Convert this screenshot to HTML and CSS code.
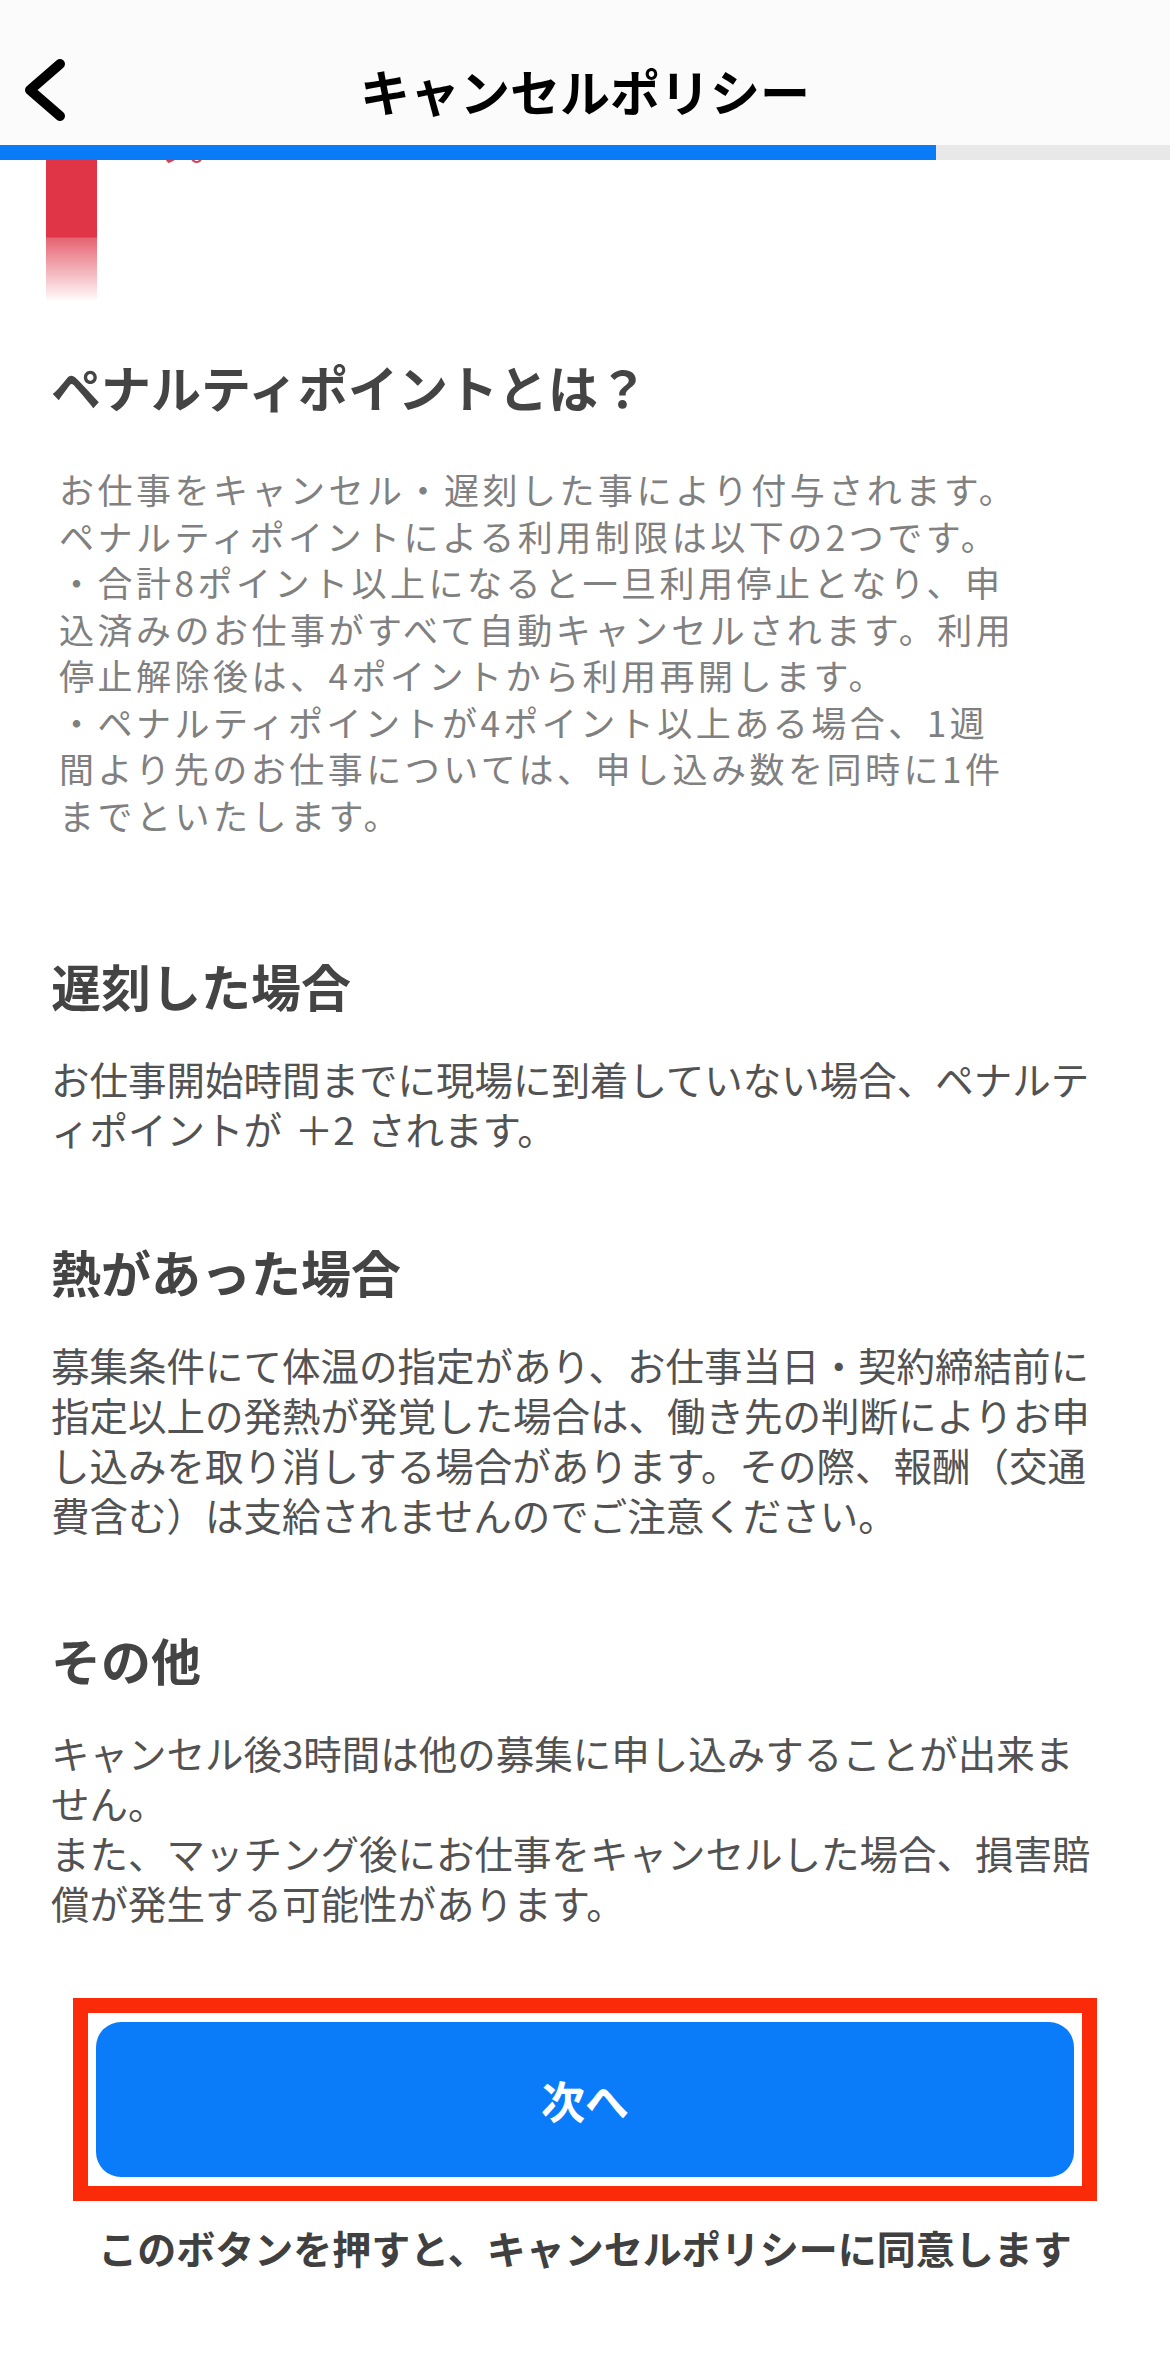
FILE: index.html
```html
<!DOCTYPE html>
<html lang="ja">
<head>
<meta charset="utf-8">
<title>キャンセルポリシー</title>
<link rel="stylesheet" href="styles.css">
</head>
<body>
<div class="screen">
  <header class="navbar">
    <div class="nav-row">
      <button class="back" aria-label="戻る">
        <svg width="44" height="64" viewBox="0 0 44 64"><path d="M36 6 L6 32 L36 58" fill="none" stroke="#000" stroke-width="10" stroke-linecap="round" stroke-linejoin="round"/></svg>
      </button>
      <h1 class="nav-title">キャンセルポリシー</h1>
      <span class="nav-spacer"></span>
    </div>
  </header>
  <div class="progress"><div class="progress-fill" style="width:80%"></div></div>

  <div class="residue">
    <div class="residue-bar"></div>
    <span class="residue-text">す。</span>
  </div>

  <main class="content">
    <section class="block">
      <h2 class="heading">ペナルティポイントとは？</h2>
      <p class="lead">お仕事をキャンセル・遅刻した事により付与されます。<br>ペナルティポイントによる利用制限は以下の2つです。<br>・合計8ポイント以上になると一旦利用停止となり、申<br>込済みのお仕事がすべて自動キャンセルされます。利用<br>停止解除後は、4ポイントから利用再開します。<br>・ペナルティポイントが4ポイント以上ある場合、1週<br>間より先のお仕事については、申し込み数を同時に1件<br>までといたします。</p>
    </section>

    <section class="block">
      <h2 class="heading">遅刻した場合</h2>
      <p class="text">お仕事開始時間までに現場に到着していない場合、ペナルテ<br>ィポイントが <span class="plus">＋2</span> されます。</p>
    </section>

    <section class="block">
      <h2 class="heading">熱があった場合</h2>
      <p class="text">募集条件にて体温の指定があり、お仕事当日・契約締結前に<br>指定以上の発熱が発覚した場合は、働き先の判断によりお申<br>し込みを取り消しする場合があります。その際、報酬（交通<br>費含む）は支給されませんのでご注意ください。</p>
    </section>

    <section class="block">
      <h2 class="heading">その他</h2>
      <p class="text">キャンセル後3時間は他の募集に申し込みすることが出来ま<br>せん。<br>また、マッチング後にお仕事をキャンセルした場合、損害賠<br>償が発生する可能性があります。</p>
    </section>
  </main>

  <div class="cta">
    <div class="cta-frame">
      <button class="next-btn">次へ</button>
    </div>
    <p class="cta-note">このボタンを押すと、キャンセルポリシーに同意します</p>
  </div>
</div>
</body>
</html>
```

FILE: styles.css
```css
* { box-sizing: border-box; }

html, body {
  margin: 0;
  padding: 0;
  background: #ffffff;
}

body {
  font-family: "Noto Sans CJK JP", "Noto Sans", sans-serif;
  color: #4a4a4a;
}

.screen {
  width: 1170px;
  min-height: 2357px;
  background: #ffffff;
}

/* ---------- nav bar ---------- */
.navbar {
  height: 145px;
  background: #fbfbfb;
  padding-top: 55px;
}

.nav-row {
  display: grid;
  grid-template-columns: 1fr auto 1fr;
  align-items: center;
  height: 70px;
}

.back {
  justify-self: start;
  margin-left: 24px;
  padding: 0;
  border: 0;
  background: none;
  display: flex;
  align-items: center;
  height: 70px;
}

.back svg { display: block; }

.nav-title {
  margin: 0;
  font-size: 50px;
  line-height: 70px;
  font-weight: 700;
  color: #000000;
}

/* ---------- progress ---------- */
.progress {
  height: 15px;
  background: #e8e8e8;
}

.progress-fill {
  height: 100%;
  background: #0a7bf6;
}

/* ---------- scrolled residue ---------- */
.residue {
  height: 140px;
  display: flex;
  align-items: flex-start;
  overflow: hidden;
}

.residue-bar {
  margin-left: 46px;
  width: 51px;
  height: 140px;
  background: linear-gradient(to bottom, #df3546 0, #df3546 77px, #e66472 78px, rgba(240, 140, 150, 0.05) 140px);
}

.residue-text {
  margin-left: 58px;
  margin-top: -40px;
  font-size: 38px;
  line-height: 48px;
  color: #d8404f;
}

/* ---------- content ---------- */
.content {
  padding: 53px 0 0 51px;
}

.heading {
  margin: 0;
  font-size: 50px;
  line-height: 67px;
  font-weight: 700;
  color: #444444;
}

.lead {
  margin: 46px 0 0 8px;
  font-size: 35px;
  letter-spacing: 3.5px;
  line-height: 46.5px;
  color: #808080;
  white-space: nowrap;
}

.text {
  margin: 34px 0 0 0;
  font-size: 38.5px;
  line-height: 50px;
  color: #525252;
  white-space: nowrap;
}

.plus {
  margin: 0 4px;
}

.block + .block { margin-top: 114px; }
.block:nth-child(3) { margin-top: 85px; }
.block:nth-child(4) { margin-top: 87px; }

/* ---------- call to action ---------- */
.cta {
  margin-top: 71px;
  display: flex;
  flex-direction: column;
  align-items: center;
}

.cta-frame {
  width: 1024px;
  border: 15px solid #fb2a08;
  padding: 9px 8px;
  background: #ffffff;
}

.next-btn {
  display: block;
  width: 100%;
  height: 155px;
  border: 0;
  border-radius: 25px;
  background: #0a7cfa;
  color: #ffffff;
  font-family: "Noto Sans CJK JP", "Noto Sans", sans-serif;
  font-size: 44px;
  font-weight: 700;
}

.cta-note {
  margin: 21px 0 0 0;
  font-size: 39px;
  line-height: 50px;
  font-weight: 700;
  color: #404040;
}
```
